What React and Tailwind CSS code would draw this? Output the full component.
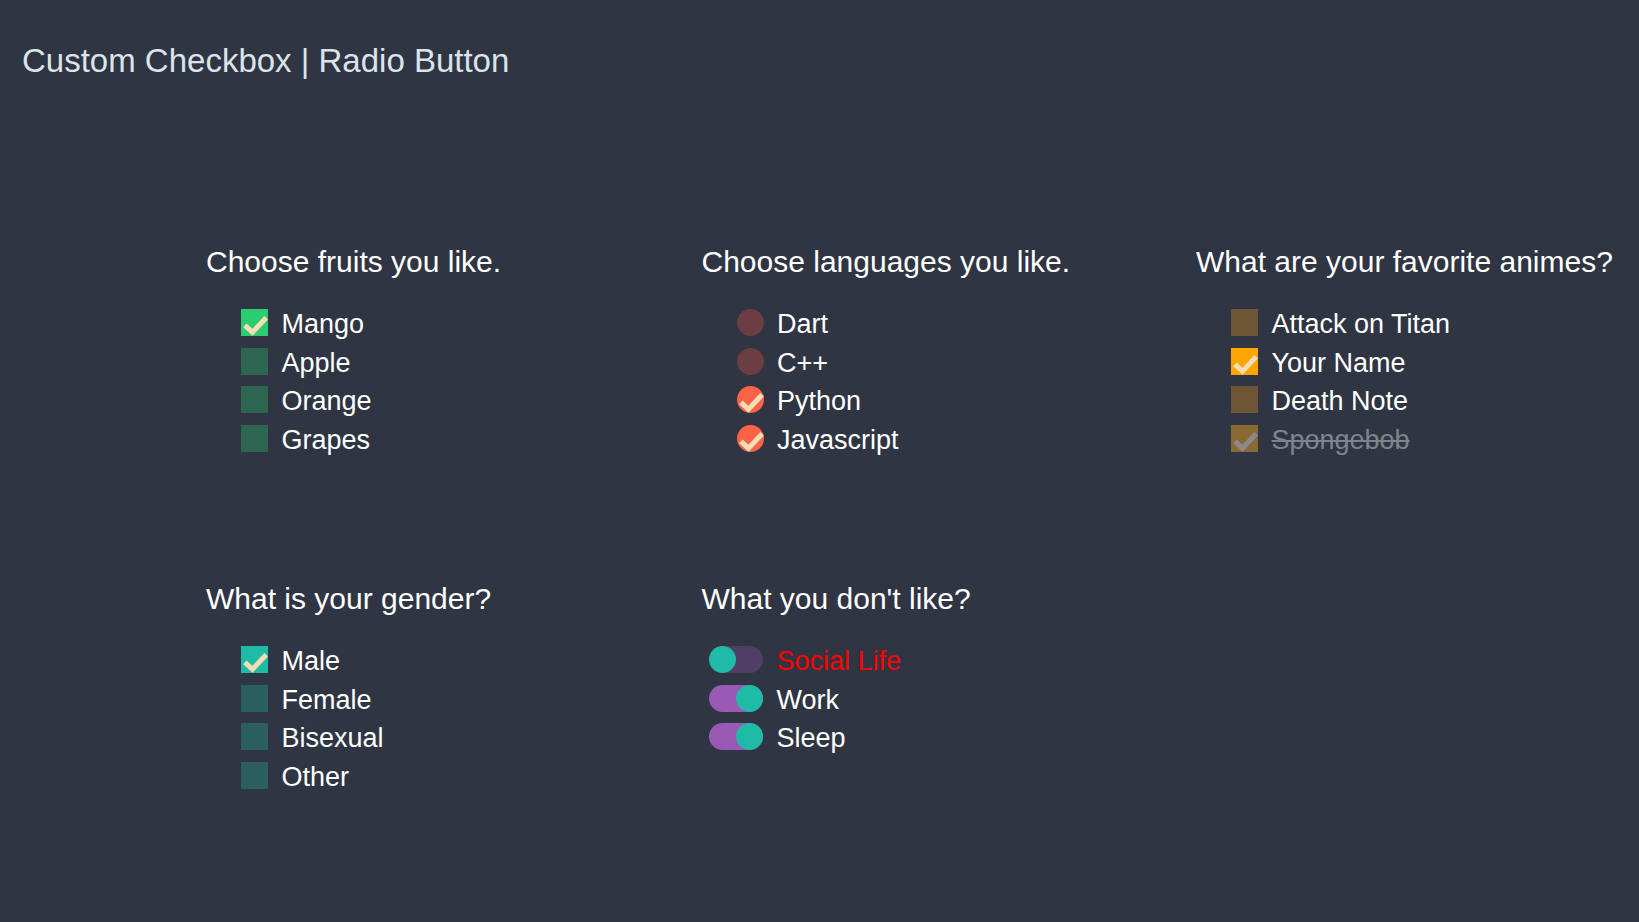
import React from "react";

const Check = ({ color = "#f5deb3" }) => (
  <svg width="27" height="27" viewBox="0 0 27 27" className="absolute inset-0">
    <polyline points="3.8,16.3 11.5,23.2 25.2,8.8" fill="none" stroke={color} strokeWidth="5" strokeLinecap="butt" strokeLinejoin="miter" />
  </svg>
);

function BoxRow({ label, checked, on, off, round, disabled }) {
  return (
    <div className="flex items-center h-[27px] pl-[35px] gap-[13.5px]">
      <div className={`relative w-[27px] h-[27px] shrink-0 overflow-hidden ${round ? "rounded-full" : ""} ${checked ? on : off}`}>
        {checked && <Check color={disabled ? "#8a8a8a" : "#f5deb3"} />}
      </div>
      <span className={`mt-[4px] text-[27px] leading-none ${disabled ? "text-[#7f838c] line-through" : "text-white"}`}>{label}</span>
    </div>
  );
}

function ToggleRow({ label, on, red }) {
  return (
    <div className="flex items-center h-[27px] pl-[7px] gap-[14px]">
      <div className={`w-[54px] h-[27px] rounded-full flex shrink-0 ${on ? "bg-[#9b59b6] justify-end" : "bg-[#4f3f65] justify-start"}`}>
        <div className="w-[27px] h-[27px] rounded-full bg-[#1fbba6]" />
      </div>
      <span className={`mt-[4px] text-[27px] leading-none ${red ? "text-[#ff0000]" : "text-white"}`}>{label}</span>
    </div>
  );
}

function Section({ title, children }) {
  return (
    <div className="flex flex-col">
      <div className="text-[30px] leading-none text-white">{title}</div>
      <div className="flex flex-col gap-[11.67px] mt-[32px]">{children}</div>
    </div>
  );
}

export default function App() {
  const green = { on: "bg-[#2ecc71]", off: "bg-[#2c6650]" };
  const tomato = { on: "bg-[#ff6347]", off: "bg-[#6c3e43]" };
  const orange = { on: "bg-[#ffa500]", off: "bg-[#6e5634]" };
  const teal = { on: "bg-[#1fbba6]", off: "bg-[#2a5e60]" };
  return (
    <div className="min-h-[922px] w-full bg-[#2f3542] font-['Liberation_Sans',Arial,sans-serif]">
      <div className="pt-[44px] pl-[22px] text-[33px] leading-none text-[#dde3ea]">Custom Checkbox | Radio Button</div>
      <div className="ml-[206px] mt-[170px] grid grid-cols-[495.5px_494.5px_1fr] gap-y-[132px]">
        <Section title="Choose fruits you like.">
          <BoxRow label="Mango" checked {...green} />
          <BoxRow label="Apple" {...green} />
          <BoxRow label="Orange" {...green} />
          <BoxRow label="Grapes" {...green} />
        </Section>
        <Section title="Choose languages you like.">
          <BoxRow label="Dart" round {...tomato} />
          <BoxRow label="C++" round {...tomato} />
          <BoxRow label="Python" round checked {...tomato} />
          <BoxRow label="Javascript" round checked {...tomato} />
        </Section>
        <Section title="What are your favorite animes?">
          <BoxRow label="Attack on Titan" {...orange} />
          <BoxRow label="Your Name" checked {...orange} />
          <BoxRow label="Death Note" {...orange} />
          <BoxRow label="Spongebob" checked disabled on="bg-[#8a6933]" off="" />
        </Section>
        <Section title="What is your gender?">
          <BoxRow label="Male" checked {...teal} />
          <BoxRow label="Female" {...teal} />
          <BoxRow label="Bisexual" {...teal} />
          <BoxRow label="Other" {...teal} />
        </Section>
        <Section title="What you don't like?">
          <ToggleRow label="Social Life" red />
          <ToggleRow label="Work" on />
          <ToggleRow label="Sleep" on />
        </Section>
      </div>
    </div>
  );
}
